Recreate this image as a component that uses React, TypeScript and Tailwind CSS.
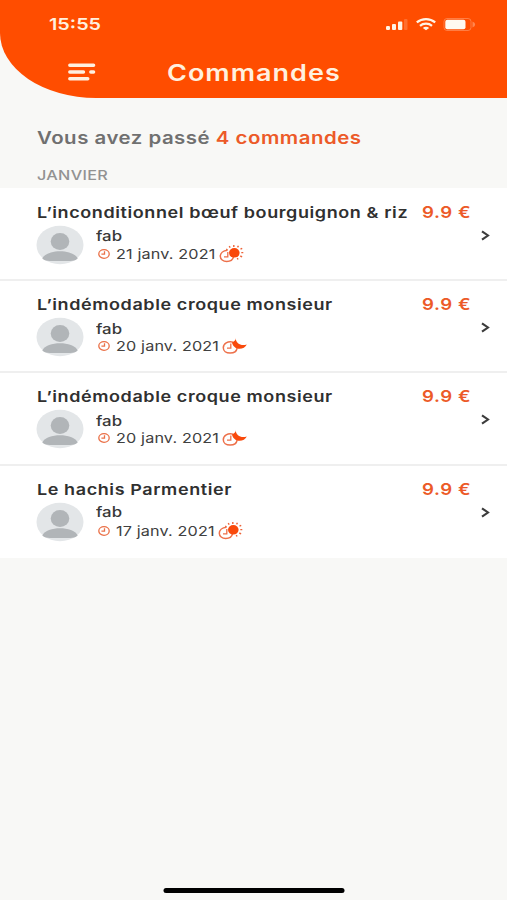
import type { ReactNode } from "react";

type Order = {
  title: string;
  date: string;
  moment: "midi" | "soir";
  nameClass: string;
};

const orders: Order[] = [
  { title: "L’inconditionnel bœuf bourguignon & riz", date: "21 janv. 2021", moment: "midi", nameClass: "mt-[3px]" },
  { title: "L’indémodable croque monsieur", date: "20 janv. 2021", moment: "soir", nameClass: "mt-[4px] -mb-px" },
  { title: "L’indémodable croque monsieur", date: "20 janv. 2021", moment: "soir", nameClass: "mt-[4px] -mb-px" },
  { title: "Le hachis Parmentier", date: "17 janv. 2021", moment: "midi", nameClass: "mt-[2.5px] mb-px" },
];

function Wide({ children, className = "" }: { children: ReactNode; className?: string }) {
  return (
    <span className={`block w-max origin-left scale-x-[1.2] whitespace-nowrap ${className}`}>
      {children}
    </span>
  );
}

function StatusIcons() {
  return (
    <div className="flex items-center">
      <svg width="24" height="14" viewBox="0 0 24 14" fill="#fff4e6">
        <rect x="0" y="9" width="4" height="4" rx="1.2" />
        <rect x="6" y="7" width="4" height="6" rx="1" />
        <rect x="12" y="4.5" width="4.3" height="8.5" rx="1" />
        <rect x="18" y="2" width="3.5" height="11" rx="1" opacity="0.2" />
      </svg>
      <svg className="ml-[6px]" width="20" height="14" viewBox="0 0 20 14" fill="none" stroke="#fff4e6" strokeWidth="2.2">
        <path d="M.8 5.4C6 1 14 1 19.2 5.4" />
        <path d="M4 8.8c3.3-2.9 8.7-2.9 12 0" />
        <path d="M10 13.2 6.8 10.9c1.6-1.4 4.8-1.4 6.4 0z" fill="#fff4e6" stroke="none" />
      </svg>
      <svg className="ml-[7px]" width="35" height="14" viewBox="0 0 35 14">
        <rect x="1" y="1.5" width="27" height="12" rx="3" fill="none" stroke="#ffad85" strokeWidth="1" opacity="0.5" />
        <rect x="2.3" y="2.8" width="20.2" height="9.4" rx="2" fill="#fffaf0" />
        <path d="M29.5 4.5c3.5 1.5 3.5 4.5 0 6z" fill="#ffad85" opacity="0.6" />
      </svg>
    </div>
  );
}

function MenuIcon() {
  return (
    <svg width="28" height="18" viewBox="0 0 28 18" fill="none" stroke="#fff0df" strokeWidth="3.4" strokeLinecap="round">
      <path d="M1.8 2.2H25.6M1.8 9H15.5M22.8 9H25.6M1.8 15.8H19.8" />
    </svg>
  );
}

function Avatar() {
  return (
    <svg className="mt-[2px] shrink-0" width="48" height="40" viewBox="0 0 48 40">
      <ellipse cx="24" cy="20" rx="23.5" ry="19.3" fill="#e3e6e8" />
      <ellipse cx="24" cy="16.5" rx="9.3" ry="8.4" fill="#b1b5b8" />
      <path d="M6.3 33.4C11 23.7 37 23.7 41.7 33.4 39.5 36 35.5 36 24 36S8.5 36 6.3 33.4z" fill="#b1b5b8" />
    </svg>
  );
}

function ClockIcon() {
  return (
    <svg width="12" height="10" viewBox="0 0 12 10" fill="none" stroke="#ea7047" strokeWidth="1.3">
      <ellipse cx="6" cy="5" rx="5.2" ry="4.3" />
      <path d="M6.5 2.2V5.2H3.4" />
    </svg>
  );
}

function SunIcon() {
  return (
    <svg width="26" height="20" viewBox="0 0 26 20" fill="none">
      <path d="M8.5 6.3C4 6.7 1.3 9.3 1.3 12.3c0 3 2.8 5.2 6.4 5.2 3.5 0 6.2-2 6.8-4.6" stroke="#ed704a" strokeWidth="1.5" />
      <path d="M8.8 8v4.9H5" stroke="#ed704a" strokeWidth="1.3" />
      <ellipse cx="15.3" cy="8.8" rx="5.3" ry="4.8" fill="#f9490b" />
      <path
        d="M14.8 1v2M19.4 1.8 18.6 3.4M23.2 4.3l-1.7.9M22.3 8.6h2M21.3 12l1.8.9M18.3 14l.7 1.5M10.2 2.2l1 1.5M7.2 5.2l1.3.6"
        stroke="#ed6338"
        strokeWidth="1.4"
      />
    </svg>
  );
}

function MoonIcon() {
  return (
    <svg width="26" height="20" viewBox="0 0 26 20" fill="none">
      <path d="M11 6.1C5.8 4.6 1.3 7.8 1.3 11.7c0 3.2 2.8 5.4 6.8 5.4 3.8 0 6.6-2 7-4.9" stroke="#ed704a" strokeWidth="1.5" />
      <path d="M8.8 7.5v4.7H5" stroke="#ed704a" strokeWidth="1.3" />
      <path d="M13.8 1.8C14 4 12.5 5.500 10 6.500c.5 3.200 3.500 6.300 7.500 6.300 3.200 0 6-1.800 7.300-4.400-3.400 1.200-6.800.6-8.800-1.200-1.600-1.400-2.400-3.300-2.200-5.400z" fill="#f9490b" />
    </svg>
  );
}

function OrderRow({ order }: { order: Order }) {
  return (
    <li className="flex h-[92.2px] border-b-2 border-[#efefef] bg-white pl-9 last:border-b-0">
      <div className="w-[386px] pt-[14px]">
        <Wide className="ml-px text-[15px] leading-5 font-semibold tracking-[0.49px] text-[#303030]">
          {order.title}
        </Wide>
        <div className="flex">
          <Avatar />
          <div className="ml-3">
            <Wide className={`text-[14px] leading-[19px] font-medium text-[#383838] ${order.nameClass}`}>fab</Wide>
            <div className="flex h-[18px] items-center">
              <span className="ml-[2px]"><ClockIcon /></span>
              <Wide className="ml-[6px] text-[13.5px] leading-[18px] tracking-[0.12px] text-[#404040]">{order.date}</Wide>
              <span className="ml-5">
                {order.moment === "midi" ? <SunIcon /> : <MoonIcon />}
              </span>
            </div>
          </div>
        </div>
      </div>
      <Wide className="h-5 pt-[14px] text-[15.5px] leading-5 font-semibold tracking-[0.5px] text-[#ec5a28]">9.9 €</Wide>
      <svg className="mt-[41px] mr-[17px] ml-auto" width="9" height="11" viewBox="0 0 9 11" fill="none" stroke="#3c3c3c" strokeWidth="2.1">
        <path d="M1 1.3 7 5.5 1 9.7" />
      </svg>
    </li>
  );
}

export default function App() {
  return (
    <div className="flex h-[900px] w-[507px] flex-col overflow-hidden bg-[#f8f8f6] font-['Inter',sans-serif]">
      <header className="h-[97.5px] shrink-0 rounded-bl-[96px_65px] bg-[#ff4d00]">
        <div className="flex h-12 items-center justify-between pr-[29px] pl-[49px]">
          <Wide className="pt-px text-[16.5px] font-semibold text-[#fff0df]">15:55</Wide>
          <StatusIcons />
        </div>
        <div className="flex h-12 items-center pl-[68px]">
          <MenuIcon />
          <Wide className="ml-[71px] pt-px text-[22.5px] font-semibold tracking-[0.85px] text-[#fff0df]">Commandes</Wide>
        </div>
      </header>

      <main>
        <div className="h-[90.5px] pt-[28px] pl-[37px]">
          <Wide className="text-[17px] leading-6 font-semibold tracking-[0.43px] text-[#707070]">
            Vous avez passé <span className="text-[#ec5a28]">4 commandes</span>
          </Wide>
          <Wide className="mt-4 text-[13.5px] leading-[18px] font-medium tracking-[0.25px] text-[#929292]">JANVIER</Wide>
        </div>
        <ul className="bg-white pt-px">
          {orders.map((order, i) => (
            <OrderRow key={i} order={order} />
          ))}
        </ul>
      </main>

      <div className="mx-auto mt-auto mb-[7px] h-[5px] w-[181px] translate-x-[0.5px] rounded-full bg-black" />
    </div>
  );
}
